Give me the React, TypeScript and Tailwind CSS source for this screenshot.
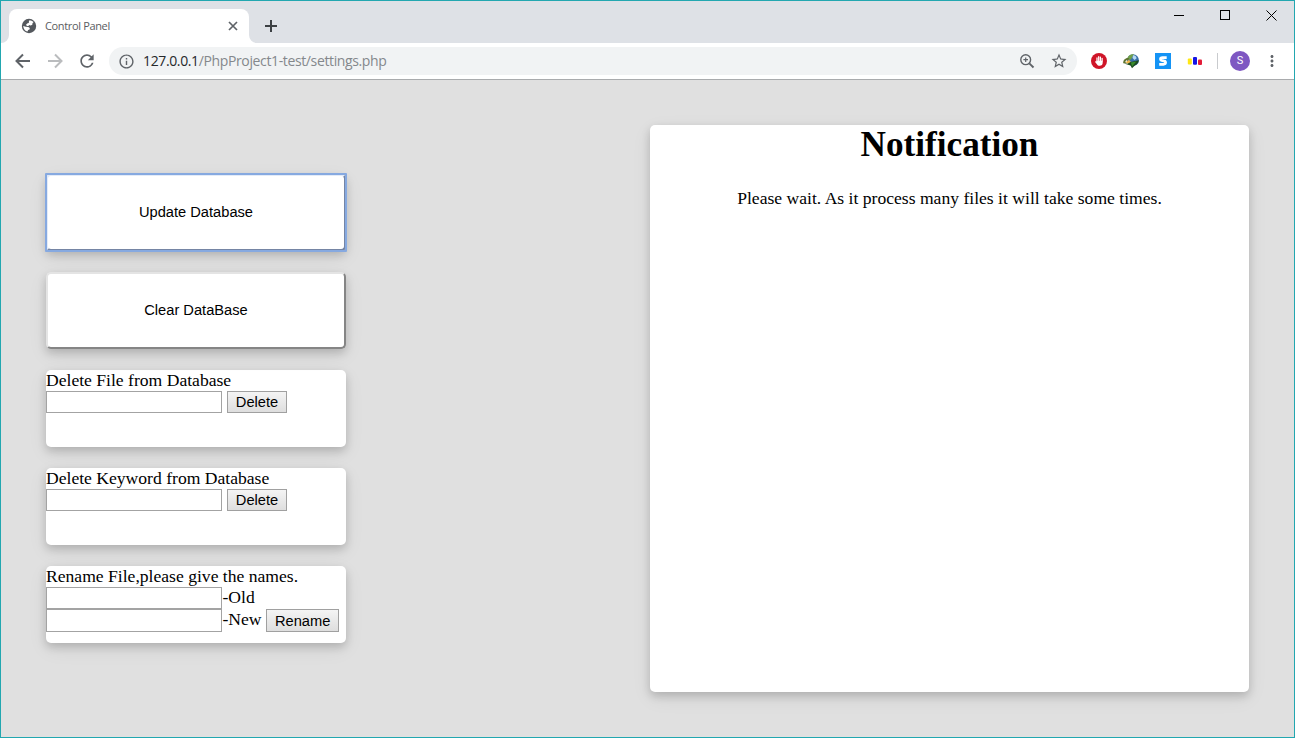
import type { ReactNode } from "react";
import { MdInfoOutline, MdMoreVert, MdRefresh, MdStarBorder } from "react-icons/md";

const cardShadow = "shadow-[0_4px_9px_rgba(0,0,0,0.17),0_6px_20px_rgba(0,0,0,0.07)]";

function SiteGlobe() {
  return (
    <svg className="h-4 w-4 shrink-0" viewBox="0 0 16 16">
      <circle cx="8" cy="8" r="7.2" fill="#54585d" />
      <path
        d="M8 2.6c1.800-.3 3.500.3 4.600 1.500l-1.100 1.200-.2 1.400-1.600.9-1.700-.5-.5 1-1.700-.2-.7-1.300 1.500-1.300 1.200-.4z"
        fill="#fff"
      />
      <path d="M2.200 7.900l2.500.8 2.600.2 1.500 1.200-.3 1.300-1.400.6-.600 1.400C4.200 13 2.400 11 2.200 7.900z" fill="#fff" />
    </svg>
  );
}

function TabStrip() {
  return (
    <div className="flex h-[42px] shrink-0 items-end bg-[#dee1e6]">
      <svg className="h-2 w-2 shrink-0" viewBox="0 0 8 8">
        <path d="M8 0v8H0a8 8 0 0 0 8-8z" fill="#fff" />
      </svg>
      <div className="flex h-[34px] w-[240px] shrink-0 items-center rounded-t-lg bg-white pl-3 pr-[9px]">
        <SiteGlobe />
        <span className="ml-2 grow font-['Open_Sans',sans-serif] text-[11px] leading-4 tracking-[-0.35px] text-[#5a5d61]">
          Control Panel
        </span>
        <svg className="h-[14px] w-[14px]" viewBox="0 0 14 14">
          <path d="M3 3l8 8M11 3l-8 8" stroke="#5f6368" strokeWidth="1.7" />
        </svg>
      </div>
      <svg className="h-2 w-2 shrink-0" viewBox="0 0 8 8">
        <path d="M0 0v8h8a8 8 0 0 1-8-8z" fill="#fff" />
      </svg>
      <svg className="mb-[10px] ml-[7px] h-[14px] w-[14px] shrink-0" viewBox="0 0 14 14">
        <path d="M7 1v12M1 7h12" stroke="#3c4043" strokeWidth="2" />
      </svg>
      <div className="flex h-full grow items-start justify-end gap-[35px] pr-[17px] pt-[9px]">
        <svg className="h-[11px] w-[11px]" viewBox="0 0 11 11">
          <path d="M0 5.500h10" stroke="#000" />
        </svg>
        <svg className="h-[11px] w-[11px]" viewBox="0 0 11 11">
          <rect x="0.5" y="0.5" width="9" height="9" fill="none" stroke="#000" />
        </svg>
        <svg className="h-[11px] w-[11px]" viewBox="0 0 11 11">
          <path d="M0.500 0.500l10 10M10.500 0.500l-10 10" stroke="#000" strokeWidth="1" />
        </svg>
      </div>
    </div>
  );
}

function HandIcon() {
  return (
    <svg className="h-4 w-4" viewBox="0 0 16 16">
      <circle cx="8" cy="8" r="8" fill="#cf1528" />
      <path
        d="M6 8.600V4.900M7.700 7.500V3.700M9.400 7.500V4M11.100 8V5.300"
        stroke="#fff"
        strokeWidth="1.25"
        strokeLinecap="round"
      />
      <path d="M5.400 7.700h6.300v2.100c0 1.900-1.100 3-2.900 3-1.500 0-2.400-.7-3.100-1.900L3.900 8.700c.2-.8 1-.7 1.500 0z" fill="#fff" />
    </svg>
  );
}

function GlobeArrowIcon() {
  return (
    <svg className="h-4 w-4" viewBox="0 0 16 16">
      <circle cx="10" cy="7.200" r="5.900" fill="#386fa8" />
      <path d="M4.600 4.400c1.700-2.700 4.200-3.700 6.400-2.900L9.500 3.600 8 6.400l-2 .4-1.400.8z" fill="#6f9f4a" />
      <path d="M10 2.300a3 3 0 0 1 3.500 3.300L11.500 7 9.500 5z" fill="#b5d9f5" />
      <path d="M0.200 10.200C0 6.800 2.600 4.300 6.200 5.100L5.400 7C3.700 6.700 2.500 7.600 2.300 9l1.700 1.400z" fill="#5f7430" />
      <path d="M2.600 9.200l3.400-2.500 2.200 2.500-3 1.700z" fill="#edb449" />
      <path d="M1 10.600l3.600.2 3-1.800 8.200-1.700c-.2 2.400-1.700 4.100-3.700 5L9 15.200 7.500 12.600z" fill="#1c4a20" />
      <path d="M7.800 9.500l5.500-.9-4.200 4.900z" fill="#398c2b" />
    </svg>
  );
}

function SIcon() {
  return (
    <svg className="h-4 w-4" viewBox="0 0 16 16">
      <path d="M0 0h16v16H0z" fill="#1493f5" />
      <path
        d="M11.700 4.600H7.500c-1.300 0-2 .500-2 1.400s.7 1.400 1.800 1.600l1.500.3c1.200.2 1.800.7 1.800 1.700s-.8 1.700-2.100 1.700H4.200"
        fill="none"
        stroke="#fff"
        strokeWidth="2.7"
      />
    </svg>
  );
}

function BarsIcon() {
  return (
    <svg className="h-4 w-4" viewBox="0 0 16 16">
      <rect x="0.8" y="5.500" width="4" height="6" rx="1" fill="#ffe715" />
      <rect x="6" y="4" width="4" height="7.800" rx="1" fill="#1515e5" />
      <rect x="11" y="6.500" width="4" height="5.500" rx="1" fill="#e31b38" />
    </svg>
  );
}

function Toolbar() {
  return (
    <div className="flex h-[37px] shrink-0 items-center border-b border-[#a9abad] bg-white pl-3 text-[#5f6368]">
      <svg className="h-5 w-5 shrink-0" viewBox="0 0 20 20" fill="none" stroke="currentColor" strokeWidth="2">
        <path d="M17 10H4M10 3.500L3.500 10l6.500 6.500" />
      </svg>
      <svg className="ml-3 h-5 w-5 shrink-0 text-[#babcbe]" viewBox="0 0 20 20" fill="none" stroke="currentColor" strokeWidth="2">
        <path d="M3 10h13M10 3.500l6.500 6.500-6.500 6.500" />
      </svg>
      <MdRefresh className="ml-3 h-5 w-5 shrink-0" />
      <div className="ml-3 flex h-7 w-[968px] shrink-0 items-center rounded-full bg-[#f1f3f4] pl-[9px] pr-[9px]">
        <MdInfoOutline className="h-[17px] w-[17px] shrink-0" />
        <span className="ml-2 grow whitespace-nowrap font-['Open_Sans',sans-serif] text-[14px] leading-5 tracking-[-0.37px] text-[#84888c]">
          <span className="text-[#26282b]">127.0.0.1</span>/PhpProject1-test/settings.php
        </span>
        <svg className="h-4 w-4" viewBox="0 0 16 16" fill="none" stroke="currentColor">
          <circle cx="6.700" cy="6.700" r="4.900" strokeWidth="1.400" />
          <path d="M10.300 10.300l4.200 4.200" strokeWidth="1.900" />
          <path d="M6.700 4.400v4.600M4.400 6.700h4.600" strokeWidth="1.200" />
        </svg>
        <MdStarBorder className="ml-[15px] h-[18px] w-[18px]" />
      </div>
      <div className="ml-[14px] flex shrink-0 gap-4">
        <HandIcon />
        <GlobeArrowIcon />
        <SIcon />
        <BarsIcon />
      </div>
      <div className="ml-[14px] h-4 w-px bg-[#c9cbce]" />
      <div className="ml-3 flex h-5 w-5 items-center justify-center rounded-full bg-[#7e57c2] font-['Roboto',sans-serif] text-[11px] text-white">
        S
      </div>
      <MdMoreVert className="ml-[13px] h-[18px] w-[18px]" />
    </div>
  );
}

function BigButton({ children, focused = false }: { children: ReactNode; focused?: boolean }) {
  return (
    <button
      className={`relative h-[77px] w-[300px] rounded-[5px] border-2 bg-white pt-px font-['Liberation_Sans',sans-serif] text-[14.66px] outline-none ${cardShadow} ${
        focused
          ? "border-t-[#e3ebf8] border-r-[#7585a4] border-b-[#7585a4] border-l-[#e3ebf8]"
          : "border-t-[#e4e4e4] border-r-[#858585] border-b-[#858585] border-l-[#e4e4e4]"
      }`}
    >
      {children}
      {focused && <span className="absolute -inset-[3px] rounded-[1px] border-2 border-[#86a9e0]" />}
    </button>
  );
}

function Card({ title, children }: { title: string; children: ReactNode }) {
  return (
    <section className={`h-[77px] w-[300px] rounded-[5px] bg-white ${cardShadow}`}>
      <h2 className="h-[21px] whitespace-nowrap leading-[21px]">{title}</h2>
      {children}
    </section>
  );
}

function Field({ label, height = "h-[22px]" }: { label: string; height?: string }) {
  return (
    <input
      aria-label={label}
      className={`${height} w-[176px] shrink-0 border border-[#a3a3a3] bg-white px-1 font-['Liberation_Sans',sans-serif] text-[14.66px] outline-none`}
    />
  );
}

function SmallButton({ children, size }: { children: string; size: string }) {
  return (
    <button
      className={`${size} shrink-0 border border-[#a0a0a0] bg-linear-to-b from-[#f4f4f4] to-[#dedede] font-['Liberation_Sans',sans-serif] text-[14.66px]`}
    >
      {children}
    </button>
  );
}

function DeleteCard({ title }: { title: string }) {
  return (
    <Card title={title}>
      <div className="flex gap-[5px] leading-5">
        <Field label={title} />
        <SmallButton size="h-[22px] w-[60px] leading-5">Delete</SmallButton>
      </div>
    </Card>
  );
}

export default function App() {
  return (
    <div className="flex h-[738px] w-[1295px] flex-col overflow-hidden border border-[#22a7b0] bg-[#e0e0e0]">
      <TabStrip />
      <Toolbar />
      <main className="flex grow items-start justify-between px-[45px] font-['Liberation_Serif',serif] text-[17.6px] text-black">
        <div className="flex flex-col gap-[21px] pt-[94px]">
          <BigButton focused>Update Database</BigButton>
          <BigButton>Clear DataBase</BigButton>
          <DeleteCard title="Delete File from Database" />
          <DeleteCard title="Delete Keyword from Database" />
          <Card title="Rename File,please give the names.">
            <div className="flex h-[22px] leading-[21px]">
              <Field label="Old name" />
              <span className="ml-[0.5px]">-Old</span>
            </div>
            <div className="flex h-[23px] leading-[21px]">
              <Field label="New name" height="h-[23px]" />
              <span className="ml-[0.5px] mr-[4.5px]">-New</span>
              <SmallButton size="h-[23px] w-[73px] pt-px leading-5">Rename</SmallButton>
            </div>
          </Card>
        </div>
        <section className={`mt-[45px] h-[567px] w-[599px] rounded-[5px] bg-white text-center ${cardShadow}`}>
          <h1 className="text-[35.2px] font-bold leading-10">Notification</h1>
          <p className="mt-[23px] leading-5">Please wait. As it process many files it will take some times.</p>
        </section>
      </main>
    </div>
  );
}
